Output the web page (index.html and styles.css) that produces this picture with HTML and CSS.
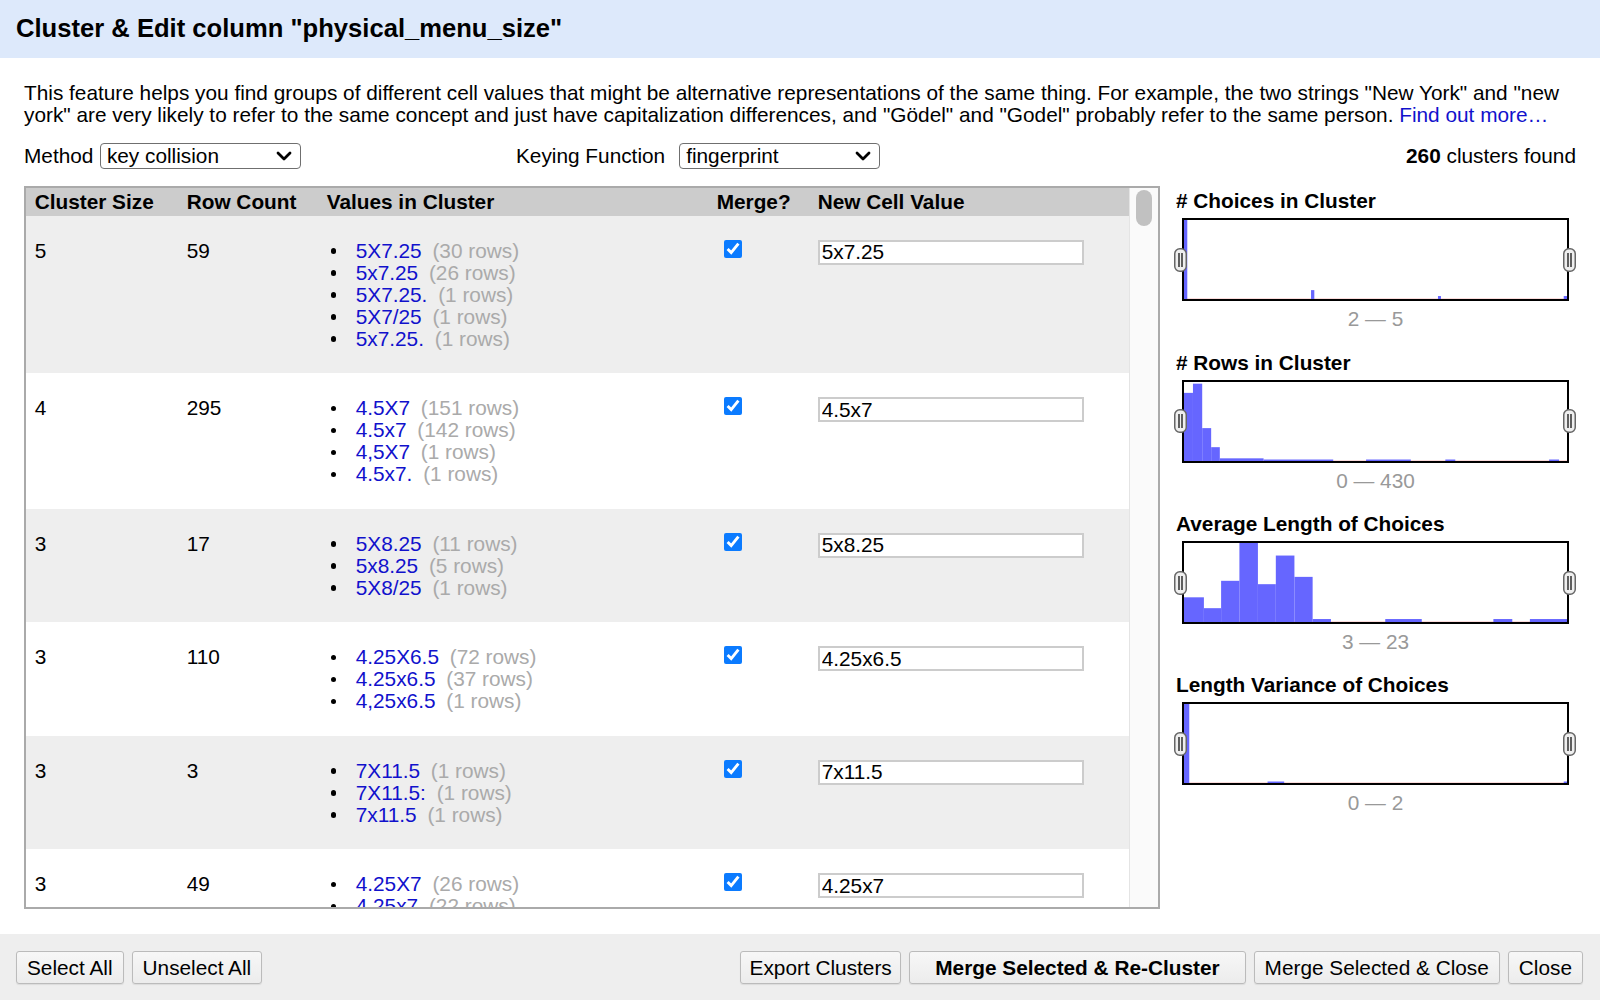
FILE: index.html
```html
<!DOCTYPE html>
<html>
<head>
<meta charset="utf-8">
<title>Cluster &amp; Edit</title>
<link rel="stylesheet" href="styles.css">
</head>
<body>
<div class="dialog">
  <header class="dlg-header"><h1>Cluster &amp; Edit column "physical_menu_size"</h1></header>
  <div class="dlg-body">
    <p class="intro">This feature helps you find groups of different cell values that might be alternative representations of the same thing. For example, the two strings "New York" and "new york" are very likely to refer to the same concept and just have capitalization differences, and "Gödel" and "Godel" probably refer to the same person. <a href="#">Find out more…</a></p>
    <div class="controls">
      <div class="ctrl ctrl-method">
        <label class="lbl lbl-method">Method</label>
        <span class="sel"><select><option>key collision</option></select><svg class="chev" width="16" height="10" viewBox="0 0 16 10"><polyline points="2,2 8,8 14,2" fill="none" stroke="#000" stroke-width="2.8" stroke-linecap="round" stroke-linejoin="round"/></svg></span>
      </div>
      <div class="ctrl">
        <label class="lbl lbl-key">Keying Function</label>
        <span class="sel"><select><option>fingerprint</option></select><svg class="chev" width="16" height="10" viewBox="0 0 16 10"><polyline points="2,2 8,8 14,2" fill="none" stroke="#000" stroke-width="2.8" stroke-linecap="round" stroke-linejoin="round"/></svg></span>
      </div>
      <div class="found"><b>260</b> clusters found</div>
    </div>
    <div class="main">
      <div class="table-box">
        <div class="table-scroll">
          <table>
            <colgroup><col class="c1"><col class="c2"><col class="c3"><col class="c4"><col></colgroup>
            <thead>
              <tr><th>Cluster Size</th><th>Row Count</th><th>Values in Cluster</th><th>Merge?</th><th>New Cell Value</th></tr>
            </thead>
            <tbody>
              <tr class="odd">
                <td>5</td><td>59</td>
                <td><ul>
                  <li><span class="val">5X7.25</span> <span class="cnt">(30 rows)</span></li>
                  <li><span class="val">5x7.25</span> <span class="cnt">(26 rows)</span></li>
                  <li><span class="val">5X7.25.</span> <span class="cnt">(1 rows)</span></li>
                  <li><span class="val">5X7/25</span> <span class="cnt">(1 rows)</span></li>
                  <li><span class="val">5x7.25.</span> <span class="cnt">(1 rows)</span></li>
                </ul></td>
                <td><input class="merge" type="checkbox" checked></td>
                <td><input class="newval" type="text" value="5x7.25"></td>
              </tr>
              <tr>
                <td>4</td><td>295</td>
                <td><ul>
                  <li><span class="val">4.5X7</span> <span class="cnt">(151 rows)</span></li>
                  <li><span class="val">4.5x7</span> <span class="cnt">(142 rows)</span></li>
                  <li><span class="val">4,5X7</span> <span class="cnt">(1 rows)</span></li>
                  <li><span class="val">4.5x7.</span> <span class="cnt">(1 rows)</span></li>
                </ul></td>
                <td><input class="merge" type="checkbox" checked></td>
                <td><input class="newval" type="text" value="4.5x7"></td>
              </tr>
              <tr class="odd">
                <td>3</td><td>17</td>
                <td><ul>
                  <li><span class="val">5X8.25</span> <span class="cnt">(11 rows)</span></li>
                  <li><span class="val">5x8.25</span> <span class="cnt">(5 rows)</span></li>
                  <li><span class="val">5X8/25</span> <span class="cnt">(1 rows)</span></li>
                </ul></td>
                <td><input class="merge" type="checkbox" checked></td>
                <td><input class="newval" type="text" value="5x8.25"></td>
              </tr>
              <tr>
                <td>3</td><td>110</td>
                <td><ul>
                  <li><span class="val">4.25X6.5</span> <span class="cnt">(72 rows)</span></li>
                  <li><span class="val">4.25x6.5</span> <span class="cnt">(37 rows)</span></li>
                  <li><span class="val">4,25x6.5</span> <span class="cnt">(1 rows)</span></li>
                </ul></td>
                <td><input class="merge" type="checkbox" checked></td>
                <td><input class="newval" type="text" value="4.25x6.5"></td>
              </tr>
              <tr class="odd">
                <td>3</td><td>3</td>
                <td><ul>
                  <li><span class="val">7X11.5</span> <span class="cnt">(1 rows)</span></li>
                  <li><span class="val">7X11.5:</span> <span class="cnt">(1 rows)</span></li>
                  <li><span class="val">7x11.5</span> <span class="cnt">(1 rows)</span></li>
                </ul></td>
                <td><input class="merge" type="checkbox" checked></td>
                <td><input class="newval" type="text" value="7x11.5"></td>
              </tr>
              <tr>
                <td>3</td><td>49</td>
                <td><ul>
                  <li><span class="val">4.25X7</span> <span class="cnt">(26 rows)</span></li>
                  <li><span class="val">4.25x7</span> <span class="cnt">(22 rows)</span></li>
                  <li><span class="val">4,25X7</span> <span class="cnt">(1 rows)</span></li>
                </ul></td>
                <td><input class="merge" type="checkbox" checked></td>
                <td><input class="newval" type="text" value="4.25x7"></td>
              </tr>
            </tbody>
          </table>
        </div>
        <div class="scrollbar"><div class="thumb"></div></div>
      </div>
      <aside class="facets">
        <section class="facet">
          <h3># Choices in Cluster</h3>
          <div class="hist">
            <svg class="bars" viewBox="0 0 385 80" preserveAspectRatio="none">
              <rect x="0" y="79" width="385" height="1" fill="#fbdcdc"/>
              <g fill="#6666ff">
                <rect x="0" y="0" width="3.3" height="80"/>
                <rect x="127.7" y="71" width="3.3" height="9"/>
                <rect x="255.3" y="77" width="3" height="3"/>
                <rect x="381.7" y="77" width="3.3" height="3"/>
              </g>
            </svg>
            <span class="handle hl"><svg width="13" height="24" viewBox="0 0 13 24"><rect x="0.75" y="0.75" width="11.5" height="22.5" rx="5" fill="#efefef" stroke="#666" stroke-width="1.5"/><line x1="5" y1="5" x2="5" y2="19" stroke="#222" stroke-width="1.4"/><line x1="8" y1="5" x2="8" y2="19" stroke="#222" stroke-width="1.4"/></svg></span>
            <span class="handle hr"><svg width="13" height="24" viewBox="0 0 13 24"><rect x="0.75" y="0.75" width="11.5" height="22.5" rx="5" fill="#efefef" stroke="#666" stroke-width="1.5"/><line x1="5" y1="5" x2="5" y2="19" stroke="#222" stroke-width="1.4"/><line x1="8" y1="5" x2="8" y2="19" stroke="#222" stroke-width="1.4"/></svg></span>
          </div>
          <div class="range">2 — 5</div>
        </section>
        <section class="facet">
          <h3># Rows in Cluster</h3>
          <div class="hist">
            <svg class="bars" viewBox="0 0 385 80" preserveAspectRatio="none">
              <rect x="0" y="79" width="385" height="1" fill="#fbdcdc"/>
              <g fill="#6666ff">
                <rect x="0" y="11" width="9" height="69"/>
                <rect x="9" y="1.7" width="9.3" height="78.3"/>
                <rect x="18.3" y="46.7" width="9" height="33.3"/>
                <rect x="27.3" y="66" width="8.7" height="14"/>
                <rect x="36" y="77.3" width="44" height="2.7"/>
                <rect x="80" y="78.5" width="70" height="1.5"/>
                <rect x="183" y="78.5" width="45" height="1.5"/>
                <rect x="262.7" y="78.5" width="10" height="1.5"/>
                <rect x="367" y="78.5" width="10" height="1.5"/>
              </g>
            </svg>
            <span class="handle hl"><svg width="13" height="24" viewBox="0 0 13 24"><rect x="0.75" y="0.75" width="11.5" height="22.5" rx="5" fill="#efefef" stroke="#666" stroke-width="1.5"/><line x1="5" y1="5" x2="5" y2="19" stroke="#222" stroke-width="1.4"/><line x1="8" y1="5" x2="8" y2="19" stroke="#222" stroke-width="1.4"/></svg></span>
            <span class="handle hr"><svg width="13" height="24" viewBox="0 0 13 24"><rect x="0.75" y="0.75" width="11.5" height="22.5" rx="5" fill="#efefef" stroke="#666" stroke-width="1.5"/><line x1="5" y1="5" x2="5" y2="19" stroke="#222" stroke-width="1.4"/><line x1="8" y1="5" x2="8" y2="19" stroke="#222" stroke-width="1.4"/></svg></span>
          </div>
          <div class="range">0 — 430</div>
        </section>
        <section class="facet">
          <h3>Average Length of Choices</h3>
          <div class="hist">
            <svg class="bars" viewBox="0 0 385 80" preserveAspectRatio="none">
              <rect x="0" y="79" width="385" height="1" fill="#fbdcdc"/>
              <g fill="#6666ff">
                <rect x="0" y="55" width="20" height="25"/>
                <rect x="20" y="66" width="17.3" height="14"/>
                <rect x="37.3" y="38.3" width="18.4" height="41.7"/>
                <rect x="55.7" y="0" width="18.6" height="80"/>
                <rect x="74.3" y="41.7" width="18" height="38.3"/>
                <rect x="92.3" y="12.7" width="18.7" height="67.3"/>
                <rect x="111" y="34.3" width="18.3" height="45.7"/>
                <rect x="129.3" y="77" width="18.4" height="3"/>
                <rect x="202.3" y="77" width="36.7" height="3"/>
                <rect x="311" y="77" width="19" height="3"/>
                <rect x="347.7" y="77" width="37.3" height="3"/>
              </g>
            </svg>
            <span class="handle hl"><svg width="13" height="24" viewBox="0 0 13 24"><rect x="0.75" y="0.75" width="11.5" height="22.5" rx="5" fill="#efefef" stroke="#666" stroke-width="1.5"/><line x1="5" y1="5" x2="5" y2="19" stroke="#222" stroke-width="1.4"/><line x1="8" y1="5" x2="8" y2="19" stroke="#222" stroke-width="1.4"/></svg></span>
            <span class="handle hr"><svg width="13" height="24" viewBox="0 0 13 24"><rect x="0.75" y="0.75" width="11.5" height="22.5" rx="5" fill="#efefef" stroke="#666" stroke-width="1.5"/><line x1="5" y1="5" x2="5" y2="19" stroke="#222" stroke-width="1.4"/><line x1="8" y1="5" x2="8" y2="19" stroke="#222" stroke-width="1.4"/></svg></span>
          </div>
          <div class="range">3 — 23</div>
        </section>
        <section class="facet">
          <h3>Length Variance of Choices</h3>
          <div class="hist">
            <svg class="bars" viewBox="0 0 385 80" preserveAspectRatio="none">
              <rect x="0" y="79" width="385" height="1" fill="#fbdcdc"/>
              <g fill="#6666ff">
                <rect x="0" y="0" width="5.3" height="80"/>
                <rect x="84" y="78.5" width="16.7" height="1.5"/>
                <rect x="381.7" y="78.5" width="3.3" height="1.5"/>
              </g>
            </svg>
            <span class="handle hl"><svg width="13" height="24" viewBox="0 0 13 24"><rect x="0.75" y="0.75" width="11.5" height="22.5" rx="5" fill="#efefef" stroke="#666" stroke-width="1.5"/><line x1="5" y1="5" x2="5" y2="19" stroke="#222" stroke-width="1.4"/><line x1="8" y1="5" x2="8" y2="19" stroke="#222" stroke-width="1.4"/></svg></span>
            <span class="handle hr"><svg width="13" height="24" viewBox="0 0 13 24"><rect x="0.75" y="0.75" width="11.5" height="22.5" rx="5" fill="#efefef" stroke="#666" stroke-width="1.5"/><line x1="5" y1="5" x2="5" y2="19" stroke="#222" stroke-width="1.4"/><line x1="8" y1="5" x2="8" y2="19" stroke="#222" stroke-width="1.4"/></svg></span>
          </div>
          <div class="range">0 — 2</div>
        </section>
      </aside>
    </div>
  </div>
  <footer class="dlg-footer">
    <div class="btn-group">
      <button>Select All</button>
      <button>Unselect All</button>
    </div>
    <div class="btn-group">
      <button class="export">Export Clusters</button>
      <button class="primary">Merge Selected &amp; Re-Cluster</button>
      <button>Merge Selected &amp; Close</button>
      <button>Close</button>
    </div>
  </footer>
</div>
</body>
</html>
```

FILE: styles.css
```css
html, body {
  margin: 0;
  padding: 0;
}
body {
  font-family: "Liberation Sans", Arial, sans-serif;
  font-size: 20.8px;
  color: #000;
  background: #fff;
}
.dialog {
  height: 1000px;
  display: flex;
  flex-direction: column;
}
.dlg-header {
  height: 58px;
  flex: none;
  background: #dde9fb;
  display: flex;
  align-items: center;
  padding-left: 16px;
}
.dlg-header h1 {
  margin: 0;
  font-size: 25.6px;
  font-weight: bold;
  line-height: 30px;
  position: relative;
  top: -1px;
}
.dlg-body {
  flex: 1;
  padding: 24px 24px 0 24px;
}
.intro {
  margin: 0;
  line-height: 22.4px;
}
.intro a {
  color: #11c;
  text-decoration: none;
}
.controls {
  display: flex;
  align-items: center;
  height: 26px;
  margin-top: 16.6px;
}
.ctrl {
  display: flex;
  align-items: center;
}
.ctrl-method {
  width: 492px;
}
.lbl-method {
  margin-right: 6.5px;
}
.lbl-key {
  margin-right: 14px;
}
.sel {
  position: relative;
  display: inline-block;
  height: 26px;
}
.sel select {
  appearance: none;
  -webkit-appearance: none;
  width: 201px;
  height: 26px;
  box-sizing: border-box;
  border: 1px solid #6f6f6f;
  border-radius: 4px;
  background: #fff;
  padding: 0 0 0 6px;
  margin: 0;
  font: inherit;
  color: #000;
  line-height: 24px;
}
.chev {
  position: absolute;
  right: 9px;
  top: 8px;
  pointer-events: none;
}
.found {
  margin-left: auto;
}
.main {
  display: flex;
  margin-top: 17px;
}
.table-box {
  width: 1136px;
  height: 723px;
  box-sizing: border-box;
  border: 2px solid #aaa;
  display: flex;
  flex: none;
}
.table-scroll {
  flex: 1;
  overflow: hidden;
}
.scrollbar {
  width: 29px;
  flex: none;
  box-sizing: border-box;
  background: #fafafa;
  border-left: 1px solid #e4e4e4;
}
.thumb {
  width: 16px;
  height: 36px;
  margin: 2px 0 0 6px;
  border-radius: 8px;
  background: #c1c1c1;
}
table {
  border-collapse: collapse;
  width: 100%;
  table-layout: fixed;
}
col.c1 { width: 152px; }
col.c2 { width: 140px; }
col.c3 { width: 390px; }
col.c4 { width: 101px; }
th {
  background: #ccc;
  text-align: left;
  font-weight: bold;
  padding: 3px 0 2.5px 8.7px;
  line-height: 21.8px;
  white-space: nowrap;
}
td {
  vertical-align: top;
  padding: 24px 0 23.5px 8.7px;
  line-height: 22px;
  background: #fff;
}
tr.odd td {
  background: #eee;
}
ul {
  list-style: none;
  margin: 0;
  padding: 0;
}
li {
  white-space: nowrap;
}
li::before {
  content: "";
  display: inline-block;
  width: 5.5px;
  height: 5.5px;
  border-radius: 50%;
  background: #000;
  margin: 0 19.5px 0 4px;
  vertical-align: middle;
  position: relative;
  top: -1px;
}
.val {
  color: #11c;
}
.cnt {
  color: #aaa;
  margin-left: 5px;
}
input.merge {
  width: 18px;
  height: 18px;
  margin: 0 0 0 7px;
  accent-color: #0b7bff;
  vertical-align: top;
}
input.newval {
  width: 266px;
  height: 25px;
  box-sizing: border-box;
  border: 2px solid #ccc;
  padding: 0 2px;
  margin: 0;
  font: inherit;
  color: #000;
  background: #fff;
  vertical-align: top;
}
.facets {
  flex: 1;
  padding: 4px 0 0 16px;
}
.facet + .facet {
  margin-top: 21.3px;
}
.facet h3 {
  margin: 0;
  font-size: 20.8px;
  font-weight: bold;
  line-height: 22px;
  white-space: nowrap;
}
.hist {
  position: relative;
  width: 387px;
  height: 83px;
  box-sizing: border-box;
  border: 2px solid #000;
  margin: 6px 0 0 6px;
  background: #fff;
}
.bars {
  display: block;
  width: 100%;
  height: 100%;
}
.handle {
  position: absolute;
  top: 50%;
  width: 13px;
  height: 24px;
  margin-top: -12px;
}
.handle svg {
  display: block;
}
.handle.hl {
  left: -10px;
}
.handle.hr {
  right: -9px;
}
.range {
  width: 387px;
  margin: 7px 0 0 6px;
  text-align: center;
  color: #999;
  line-height: 22px;
}
.dlg-footer {
  height: 66px;
  flex: none;
  box-sizing: border-box;
  background: #eee;
  display: flex;
  justify-content: space-between;
  align-items: flex-start;
  padding: 17px 17px 0 16px;
}
.btn-group {
  display: flex;
  gap: 8px;
}
button {
  font: inherit;
  height: 33px;
  padding: 0 10px;
  border: 1px solid #bbb;
  border-radius: 3px;
  background: linear-gradient(#f7f7f7, #ececec);
  color: #000;
  box-shadow: 0 1px 1px rgba(0, 0, 0, 0.08);
}
button.export {
  padding: 0 8.5px;
}
button.primary {
  font-weight: bold;
  padding: 0 25px;
}
```
